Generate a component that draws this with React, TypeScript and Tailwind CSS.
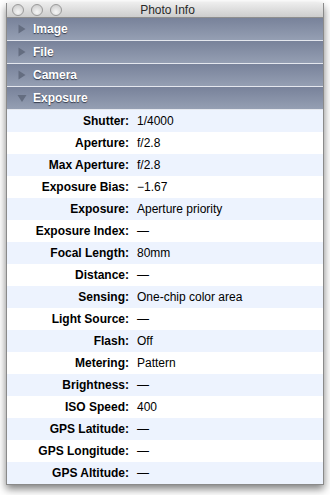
import { ReactNode } from "react";

const sections = ["Image", "File", "Camera"];

const rows: [string, string][] = [
  ["Shutter", "1/4000"],
  ["Aperture", "f/2.8"],
  ["Max Aperture", "f/2.8"],
  ["Exposure Bias", "\u22121.67"],
  ["Exposure", "Aperture priority"],
  ["Exposure Index", "\u2014"],
  ["Focal Length", "80mm"],
  ["Distance", "\u2014"],
  ["Sensing", "One-chip color area"],
  ["Light Source", "\u2014"],
  ["Flash", "Off"],
  ["Metering", "Pattern"],
  ["Brightness", "\u2014"],
  ["ISO Speed", "400"],
  ["GPS Latitude", "\u2014"],
  ["GPS Longitude", "\u2014"],
  ["GPS Altitude", "\u2014"],
];

function Light() {
  return (
    <div className="h-[12px] w-[12px] rounded-full border border-[#9a9a9a] bg-[radial-gradient(circle_at_50%_70%,#f6f6f6,#c6c6c6)]" />
  );
}

function Header({ open, children }: { open?: boolean; children: ReactNode }) {
  return (
    <div className="flex h-[23px] items-center border-b border-[#e4e7ee] bg-gradient-to-b from-[#78829a] to-[#959fb3] pl-[10px]">
      <svg width="10" height="10" viewBox="0 0 10 10" className="mr-[6px]">
        {open ? (
          <path d="M0.5 2 L9.5 2 L5 9 Z" fill="#646d80" />
        ) : (
          <path d="M1.5 0.5 L8.5 5 L1.5 9.5 Z" fill="#646d80" />
        )}
      </svg>
      <span className="text-[12px] font-bold text-white [text-shadow:0_1px_1px_rgba(30,35,50,0.8)]">
        {children}
      </span>
    </div>
  );
}

export default function App() {
  return (
    <div
      className="h-[495px] w-[330px] bg-white pl-[6px] pt-[3px]"
      style={{ fontFamily: '"Liberation Sans", Arial, sans-serif' }}
    >
      <div className="w-[318px] border border-t-0 border-[#8a8a8a] shadow-[0_4px_8px_rgba(0,0,0,0.5)]">
        {/* title bar */}
        <div className="relative flex h-[15px] items-center border-b border-[#8e8e8e] bg-gradient-to-b from-[#ececec] to-[#cdcdcd] pl-[5px]">
          <div className="flex gap-[7px]">
            <Light />
            <Light />
            <Light />
          </div>
          <span className="flex-1 pr-[50px] text-center text-[12px] text-[#2a2a2a]">
            Photo Info
          </span>
        </div>

        {sections.map((s) => (
          <Header key={s}>{s}</Header>
        ))}
        <Header open>Exposure</Header>

        <div>
          {rows.map(([label, value], i) => (
            <div
              key={label}
              className={`flex h-[22px] items-center text-[12px] text-black ${
                i % 2 === 0 ? "bg-[#edf3fe]" : "bg-white"
              }`}
            >
              <span className="w-[122px] text-right font-bold">{label}:</span>
              <span className="pl-[8px]">{value}</span>
            </div>
          ))}
        </div>
      </div>
    </div>
  );
}
